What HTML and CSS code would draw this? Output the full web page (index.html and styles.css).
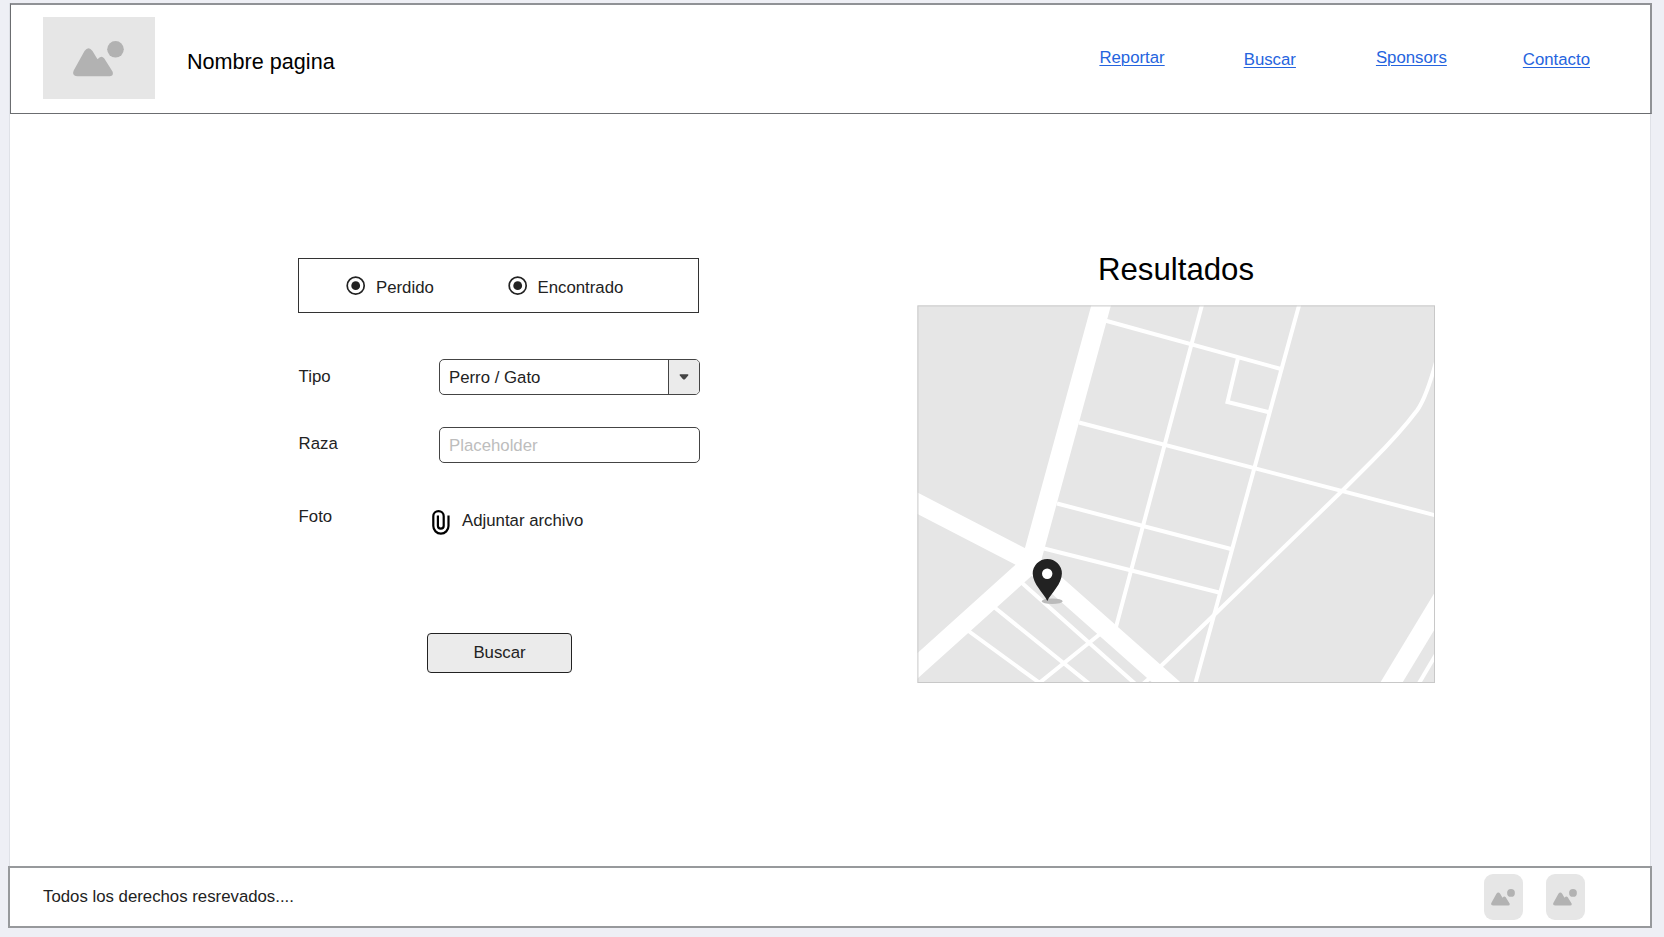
FILE: index.html
```html
<!DOCTYPE html>
<html lang="es">
<head>
<meta charset="utf-8">
<title>Nombre pagina</title>
<link rel="stylesheet" href="styles.css">
</head>
<body>
<svg class="defs" width="0" height="0">
  <symbol id="picture" viewBox="0 0 51 36">
    <circle cx="42.500" cy="8.300" r="8.300"/>
    <path d="M4.500 35.200Q-1.500 35 .7 29.500L11.500 10Q15.500 4.500 19.500 10L24.500 18.300Q28.200 13.500 31.300 17.500L39.500 30.500Q41 35 36.500 35.200Z"/>
  </symbol>
</svg>
<div class="page">
  <header class="header">
    <div class="logo"><svg class="logo-icon"><use href="#picture"/></svg></div>
    <div class="site-name">Nombre pagina</div>
    <nav class="nav">
      <a href="#" class="link link-report">Reportar</a>
      <a href="#" class="link link-search">Buscar</a>
      <a href="#" class="link link-sponsors">Sponsors</a>
      <a href="#" class="link link-contact">Contacto</a>
    </nav>
  </header>
  <main class="main">
    <form class="form">
      <div class="status">
        <label class="option option-lost"><svg class="radio" viewBox="0 0 20 20"><circle class="ring" cx="9.700" cy="9.700" r="8.500"/><circle cx="9.700" cy="9.700" r="4.400"/></svg><span>Perdido</span></label>
        <label class="option"><svg class="radio" viewBox="0 0 20 20"><circle class="ring" cx="9.700" cy="9.700" r="8.500"/><circle cx="9.700" cy="9.700" r="4.400"/></svg><span>Encontrado</span></label>
      </div>
      <div class="row row-type">
        <span class="label">Tipo</span>
        <div class="field select"><span class="value">Perro / Gato</span><span class="arrow"><svg width="10" height="6" viewBox="0 0 10 6"><path d="M1.200 .3H8.800Q10 .6 9.200 1.500L6 5.200Q5 6 4 5.200L.8 1.500Q0 .6 1.200 .3Z"/></svg></span></div>
      </div>
      <div class="row row-breed">
        <span class="label">Raza</span>
        <div class="field placeholder">Placeholder</div>
      </div>
      <div class="row row-photo">
        <span class="label">Foto</span>
        <div class="attach"><svg class="clip" viewBox="0 0 18 25"><path d="M16.500 5.500V16A7.600 7.600 0 0 1 1.300 16V6.300A5.200 5.200 0 0 1 11.700 6.300V15.700A2.900 2.900 0 0 1 5.900 15.700V5.500"/></svg><span>Adjuntar archivo</span></div>
      </div>
      <button type="button" class="submit">Buscar</button>
    </form>
    <section class="results">
      <h1 class="title">Resultados</h1>
      <svg class="map" viewBox="917 305 518 378">
        <rect class="land" x="917.500" y="305.500" width="517.500" height="377.500"/>
        <g class="streets">
          <path class="avenue" d="M1102.600 300L1028.500 571M1034 561L900 681.500M900 494.200L1036 564.500M1028 560L1175 690"/>
          <path class="avenue" d="M1386.900 690L1450 585.500"/>
          <path class="street" d="M1105 320.500L1281 369M1079 422.500L1440 516.500M1057 503.500L1231 549M1044 548.500L1219 592.500"/>
          <path class="street" d="M1203.300 300L1116 627M1300.500 300L1193.500 690M1238 358L1227.500 402L1268 412"/>
          <path class="street" d="M1436 362Q1426 398 1417 410.500Q1400 433 1372 461L1342 491L1213 616L1161 666"/>
          <path class="street" d="M1022 583L1141 689M994 607L1097 690M968.500 631L1048 689M1100 634L1033 688M1151 677L1136 690"/>
          <path class="street" d="M1415 690L1438 651"/>
        </g>
        <ellipse class="shadow" cx="1052.200" cy="601.200" rx="10.500" ry="2.800"/>
        <path class="pin" d="M1047.300 601C1043.500 593 1032.700 584 1032.700 573.600A14.600 14.600 0 0 1 1061.900 573.600C1061.900 584 1051.500 593 1047.300 601Z"/>
        <circle class="hole" cx="1047.200" cy="573.800" r="5.200"/>
        <rect class="frame" x="917.900" y="305.900" width="516.600" height="376.600"/>
      </svg>
    </section>
  </main>
  <footer class="footer">
    <span class="rights">Todos los derechos resrevados....</span>
    <div class="thumb"><svg class="thumb-icon"><use href="#picture"/></svg></div>
    <div class="thumb"><svg class="thumb-icon"><use href="#picture"/></svg></div>
  </footer>
</div>
</body>
</html>
```
FILE: styles.css
```css
* { box-sizing: border-box; }
body {
  margin: 0;
  height: 937px;
  overflow: hidden;
  background: #eeeff5;
  color: #222;
  font: 16.800px/20px "Liberation Sans", Arial, sans-serif;
}
.defs { display: block; height: 0; }
.page {
  width: 1644px;
  height: 925px;
  margin: 3px 0 0 8px;
  display: flex;
  flex-direction: column;
  background: linear-gradient(#dfe1e7, #dfe1e7) 1px 0 / 1px 100% no-repeat, linear-gradient(#dfe1e7, #dfe1e7) 1642px 0 / 1px 100% no-repeat, linear-gradient(#fff, #fff) 2px 0 / 1640px 100% no-repeat;
}
.header {
  height: 111px;
  margin-left: 2px;
  display: flex;
  align-items: flex-start;
  background: #fff;
  border: 1px solid #6b6d70;
  border-top: 2px solid #909296;
  border-right: 2px solid #909296;
}
.logo {
  width: 112px;
  height: 82px;
  margin: 12px 0 0 31.500px;
  padding: 24px 0 0 30.500px;
  background: #e6e6e6;
}
.logo-icon { display: block; width: 51px; height: 36px; fill: #b2b2b2; }
.site-name { margin: 43px 0 0 32.500px; font-size: 21.600px; line-height: 28px; color: #000; }
.nav { display: flex; margin-left: auto; padding: 43px 60px 0 0; }
.link { color: #2564de; text-underline-offset: 1.500px; text-decoration-thickness: 1px; }
.link-search { margin: 2px 0 0 79px; }
.link-sponsors { margin-left: 80px; }
.link-contact { margin: 2px 0 0 76px; }
.main { height: 752px; display: flex; align-items: flex-start; padding-left: 290px; }
.form { width: 402px; padding-top: 144px; }
.status {
  width: 401px;
  height: 55px;
  display: flex;
  padding: 17px 0 0 47px;
  border: 1.400px solid #333;
}
.option { display: flex; }
.option-lost { width: 161.500px; }
.radio { width: 20px; height: 20px; margin-right: 10px; fill: #222; }
.option span { padding-top: 2px; }
.ring { fill: none; stroke: #222; stroke-width: 1.700; }
.row { display: flex; align-items: flex-start; }
.label { width: 141px; padding-left: .6px; }
.row-type { margin-top: 46px; }
.row-breed { margin-top: 32px; }
.row-photo { margin-top: 44px; }
.row-type .label { padding-top: 8px; }
.row-breed .label { padding-top: 7px; }
.field {
  width: 261px;
  height: 36px;
  border: 1px solid #444;
  border-radius: 5px;
  padding: 8px 0 0 9px;
}
.select { display: flex; padding: 0; overflow: hidden; }
.value { flex: 1; padding: 8px 0 0 9px; }
.arrow { width: 31px; display: flex; align-items: center; justify-content: center; background: #ebebeb; border-left: 1px solid #444; fill: #444; }
.placeholder { color: #bdbdbd; }
.attach { display: flex; margin: 3px 0 0 -7px; }
.clip { width: 18px; height: 25px; margin-right: 12px; fill: none; stroke: #000; stroke-width: 2.200; }
.attach span { padding-top: 1px; }
.submit {
  display: block;
  width: 145px;
  height: 40px;
  margin: 98px 0 0 129px;
  padding: 0;
  border: 1px solid #222;
  border-radius: 4px;
  background: #ebebeb;
  color: #222;
  font: inherit;
}
.results { width: 518px; margin-left: 217px; padding-top: 136px; }
.title { margin: 0; height: 55px; font-size: 31.200px; line-height: 40px; font-weight: 400; text-align: center; color: #000; }
.map { display: block; width: 518px; height: 378px; }
.land { fill: #e6e6e6; }
.streets { fill: none; stroke: #fff; }
.avenue { stroke-width: 19; }
.street { stroke-width: 4; }
.shadow { fill: #bbb; }
.pin { fill: #222; }
.hole { fill: #fff; }
.frame { fill: none; stroke: #c8c8c8; }
.footer {
  height: 62px;
  display: flex;
  align-items: flex-start;
  background: #fff;
  border: 2px solid #97999c;
}
.rights { flex: 1; margin: 19px 0 0 33px; }
.thumb {
  width: 39px;
  height: 46px;
  margin: 6px 23px 0 0;
  padding: 15px 0 0 7px;
  border-radius: 9px;
  background: #e6e6e6;
}
.thumb:last-child { margin-right: 65px; }
.thumb-icon { display: block; width: 24px; height: 17px; fill: #b2b2b2; }
```
